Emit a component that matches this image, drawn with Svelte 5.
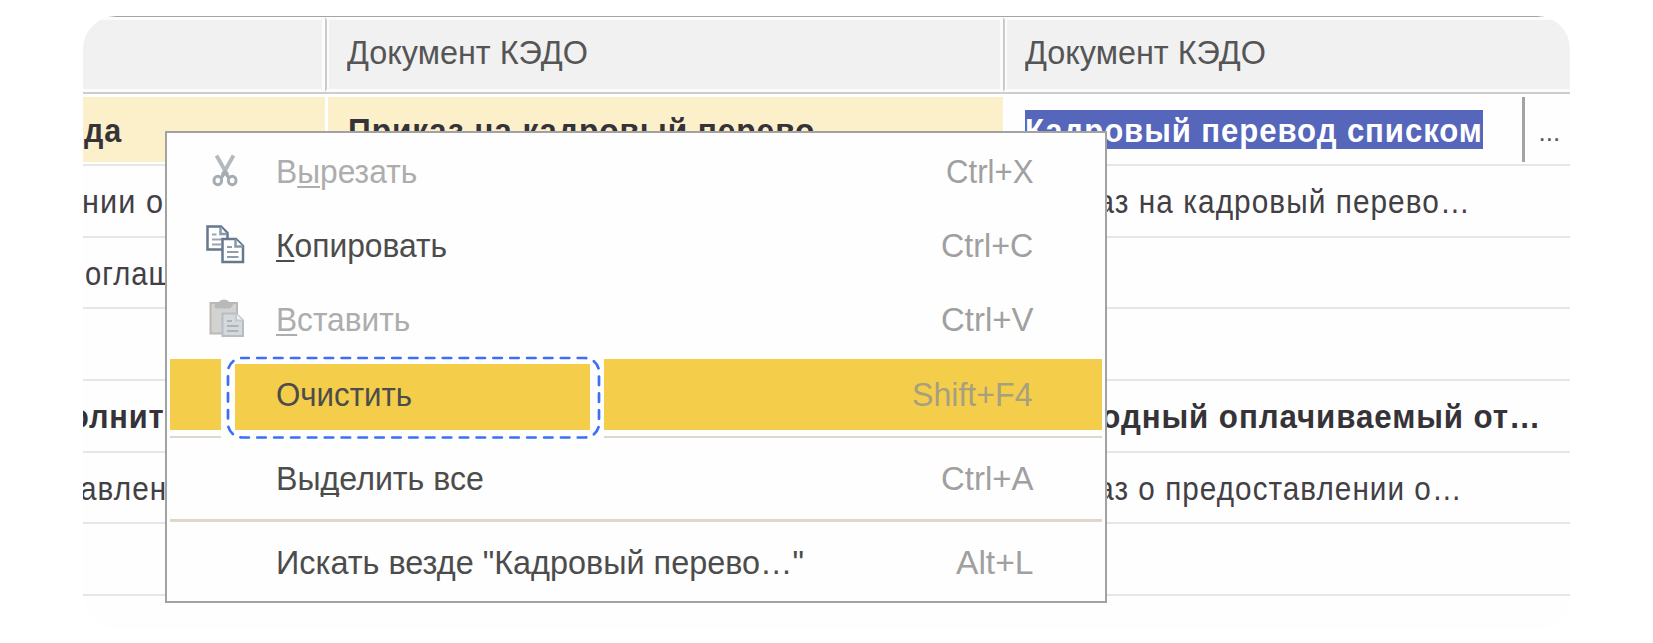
<script>
  const left = [
    { text: 'да', x: 0.5, w: 38.5, bold: true },
    { text: 'нии оп', x: -1.5, w: 100 },
    { text: 'соглаше', x: -14, w: 121 },
    null,
    { text: 'олните', x: -13, w: 113, bold: true },
    { text: 'авлени', x: -3, w: 105 },
    null
  ];
  const middle = [{ text: 'Приказ на кадровый перево', w: 467, bold: true }, null, null, null, null, null, null];
  const right = [
    null,
    { text: 'Приказ на кадровый перево…', w: 446 },
    null,
    null,
    { text: 'Ежегодный оплачиваемый от…', w: 516, bold: true },
    { text: 'Приказ о предоставлении о…', w: 438 },
    null
  ];
  const items = [
    { icon: 'cut', pre: 'В', key: 'ы', post: 'резать', w: 141, hot: 'Ctrl+X', hw: 87, off: true },
    { icon: 'copy', pre: '', key: 'К', post: 'опировать', w: 171, hot: 'Ctrl+C', hw: 92 },
    { icon: 'paste', pre: '', key: 'В', post: 'ставить', w: 134, hot: 'Ctrl+V', hw: 92, off: true },
    { pre: 'Очистить', key: '', post: '', w: 136, hot: 'Shift+F4', hw: 121, active: true },
    { pre: 'Вы', key: 'д', post: 'елить все', w: 208, hot: 'Ctrl+A', hw: 92, rule: true },
    { pre: 'Искать везде "Кадровый перево…"', key: '', post: '', w: 528, hot: 'Alt+L', hw: 77, rule: true }
  ];

  // Condenses a label horizontally to the given width.
  function fit(node, width) {
    node.style.transform = `scaleX(${width / node.offsetWidth})`;
  }
</script>

<main>
  <section class="card">
    <header class="head">
      <div class="th"></div>
      <div class="th"><span class="t ht" use:fit={241}>Документ КЭДО</span></div>
      <div class="th"><span class="t ht" use:fit={241}>Документ КЭДО</span></div>
    </header>
    {#each left as cell, i}
      <div class="row" class:current={i === 0}>
        <div class="td first">
          {#if cell}<span class="t" class:bold={cell.bold} style="margin-left:{cell.x}px" use:fit={cell.w}>{cell.text}</span>{/if}
        </div>
        <div class="td">
          {#if middle[i]}<span class="t bold" use:fit={middle[i].w}>{middle[i].text}</span>{/if}
        </div>
        <div class="td">
          {#if i === 0}
            <div class="selected"><span class="t bold" use:fit={458}>Кадровый перевод списком</span></div>
            <div class="pick">...</div>
          {:else if right[i]}
            <span class="t" class:bold={right[i].bold} use:fit={right[i].w}>{right[i].text}</span>
          {/if}
        </div>
      </div>
    {/each}
  </section>

  <nav class="menu">
    {#each items as it}
      {#if it.rule}<div class="rule"></div>{/if}
      <div class="item" class:off={it.off} class:active={it.active} class:tall={it.rule}>
        <div class="icon">
          {#if it.icon === 'cut'}
            <svg width="40" height="40" viewBox="0 0 40 40" fill="none" stroke="#a3adb3">
              <path d="M11.5 4.500 L22.500 24 M28.500 4.500 L17.500 24" stroke-width="3.800" stroke="#b2babf" />
              <path d="M16 27 L20 21 L24 27" stroke-width="3.400" />
              <ellipse cx="12.800" cy="29.500" rx="3.800" ry="4.300" stroke-width="3" />
              <ellipse cx="27.200" cy="29.500" rx="3.800" ry="4.300" stroke-width="3" />
            </svg>
          {:else if it.icon === 'copy'}
            <svg width="40" height="40" viewBox="0 0 40 40" fill="#fff" stroke="#66788a" stroke-width="2.500">
              <path d="M2.500 1.500 H16 L22.500 8 V24.500 H2.500 Z" />
              <path d="M15.500 2 V9 H22" stroke="#8799ac" />
              <path d="M7 9.500 H11.500 M7 14.500 H17 M7 19.500 H16" stroke="#98a6b4" stroke-width="2" />
              <path d="M17.500 14 H31 L38 21 V37 H17.500 Z" />
              <path d="M30.500 14.500 V21.500 H38" stroke="#8799ac" />
              <path d="M22 22 H27 M22 27 H33.500 M22 32 H33.500" stroke="#8f9ead" stroke-width="2" />
            </svg>
          {:else if it.icon === 'paste'}
            <svg width="40" height="40" viewBox="0 0 40 40" fill="#d2d2d1" stroke="#bcb7b1" stroke-width="2">
              <path d="M5.500 4 H32 V34.500 H5.500 Z" />
              <path d="M10 8.500 V5.500 L14 3.500 Q15 1 19 1 Q23 1 24 3.500 L28 5.500 L25 9 H13 Z" fill="#b9b9b9" stroke="#b9b9b9" stroke-width="1" />
              <path d="M17.500 14.500 H31 L38 21.500 V37 H17.500 Z" fill="#d5d9dc" stroke="#b5bdc4" />
              <path d="M31 14.500 V21.500 H38" stroke="#c2c8cc" fill="#eee" />
              <path d="M22 22 H27 M22 27 H33.500 M22 32 H33.500" stroke="#a9b5be" stroke-width="2" />
            </svg>
          {/if}
        </div>
        <span class="t mt" use:fit={it.w}>{it.pre}<u>{it.key}</u>{it.post}</span>
        <span class="t hot" use:fit={it.hw}>{it.hot}</span>
        {#if it.active}
          <div class="ring">
            <svg width="383" height="93" viewBox="221 351 383 93" fill="none">
              <rect x="228" y="358" width="371" height="79.500" rx="14" stroke="#3b6ff5" stroke-width="2.700" stroke-linecap="round" stroke-dasharray="8.500 8.370" stroke-dashoffset="1.700" />
            </svg>
          </div>
        {/if}
      </div>
    {/each}
  </nav>
</main>

<style>
  :global(body) { background: #fff; overflow: hidden; }
  main {
    position: relative;
    width: 1653px;
    height: 643px;
    box-sizing: border-box;
    padding: 16px 83px 0;
    font-family: "Liberation Sans", Arial, sans-serif;
    font-size: 34px;
    line-height: 40px;
    color: #424045;
  }
  .card {
    height: 613px;
    width: 1486.5px;
    border-radius: 33px;
    overflow: hidden;
    background: #fefefe;
  }
  .head, .row {
    display: grid;
    grid-template-columns: 242px 678px 1fr;
    box-sizing: border-box;
  }
  .head { height: 78px; border-top: 1.500px solid #a5a5a5; border-bottom: 2px solid #cdcdcd; }
  .th {
    display: flex;
    align-items: center;
    box-sizing: border-box;
    padding: 0 0 5px 15px;
    background: #f1f1f1;
    border: 3px solid #fcfcfc;
    border-left-width: 2px;
    color: #555;
  }
  .th + .th { border-left: 2px solid #cacaca; box-shadow: inset 2px 0 #fcfcfc; padding-left: 20px; }
  .th:first-child { border-left: 0; }
  .th:last-child { border-right: 0; }
  .t { display: block; white-space: pre; flex: none; transform-origin: left; letter-spacing: 1.200px; }
  .ht { letter-spacing: 0; }
  .bold { font-weight: 700; color: #353238; letter-spacing: 1px; }
  .row { height: 71.700px; border-bottom: 2px solid #e6e6e6; }
  .td { display: flex; align-items: center; min-width: 0; padding-left: 22px; }
  .td.first { padding-left: 0; }
  .current { padding: 3px 0 2px; height: 72px; }
  .current .td { background: #fcf0cb; border-left: 3px solid #fff; padding-left: 20px; }
  .current .td.first { border: 0; padding: 0; }
  .current .td:last-child { background: #fefefe; padding-left: 19px; }
  .selected { width: 458px; height: 39px; background: #5566bb; display: flex; align-items: center; flex: none; }
  .selected .t { color: #fff; }
  .pick {
    margin-left: auto;
    width: 31px;
    padding-left: 14px;
    height: 65px;
    line-height: 70px;
    border-left: 3px solid #a4a4a4;
    font-size: 26px;
    color: #555;
  }

  .menu {
    position: absolute;
    left: 165px;
    top: 131px;
    width: 942px;
    height: 472px;
    box-sizing: border-box;
    border: 2px solid #a2a2a2;
    background: #fefefe;
    padding: 1px 3px;
  }
  .item {
    position: relative;
    display: flex;
    align-items: center;
    height: 74.200px;
    box-sizing: border-box;
    padding: 0 69px 0 35px;
    color: #4c4c4c;
  }
  .item.tall { height: 77px; padding-top: 2px; }
  .item.active { height: 71px; margin: 2.400px 0 6px; background: #f4ce4a; }
  .icon { width: 70.500px; display: flex; flex: none; }
  .icon svg { display: block; }
  .mt { letter-spacing: 0; }
  .off { color: #adadad; }
  u { text-decoration-thickness: 2px; text-underline-offset: 3px; text-decoration-skip-ink: none; }
  .hot { margin-left: auto; transform-origin: right; color: #a0a0a0; letter-spacing: 0; }
  .active .hot { color: #a69f80; }
  .rule { height: 2.500px; background: #ded8cb; }
  .tall + .rule { margin-top: 4px; }
  .rule + .item:last-child { padding-top: 4px; }
  .ring {
    position: absolute;
    left: 51px;
    top: -8px;
    width: 383px;
    height: 93px;
    box-sizing: border-box;
    border: solid #fefefe;
    border-width: 13px 14px 14px;
  }
  .ring svg { display: block; margin: -13px -14px; }
</style>
